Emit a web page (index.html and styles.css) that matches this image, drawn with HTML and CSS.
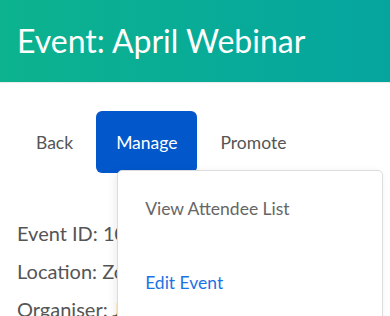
FILE: index.html
```html
<!DOCTYPE html>
<html>
<head>
<meta charset="utf-8">
<link rel="stylesheet" href="styles.css">
</head>
<body>
<header class="header"><h1 class="title">Event: April Webinar</h1></header>
<nav class="tabs">
  <a class="tab">Back</a>
  <div class="tab-wrap">
    <a class="tab active">Manage</a>
    <div class="menu">
      <a class="menu-item">View Attendee List</a>
      <a class="menu-item link">Edit Event</a>
    </div>
  </div>
  <a class="tab">Promote</a>
</nav>
<main class="details">
  <p class="line">Event ID: 1024</p>
  <p class="line">Location: Zoom</p>
  <p class="line">Organiser: Jane Smith</p>
</main>
</body>
</html>
```
FILE: styles.css
```css
* { box-sizing: border-box; }
html, body { margin: 0; padding: 0; }
body {
  font-family: Lato, "Noto Sans", sans-serif;
  background: #fff;
  width: 390px;
  height: 316px;
  overflow: hidden;
}
.header {
  height: 82px;
  background: linear-gradient(90deg, #0cb38e 0%, #05a59f 100%);
  box-shadow: 0 1px 1px rgba(0,0,0,0.08);
  display: flex;
  align-items: center;
  padding: 0 17px;
}
.title {
  margin: 0 0 2px;
  color: #fff;
  font-weight: 400;
  font-size: 32px;
}
.tabs {
  display: flex;
  gap: 3px;
  margin-top: 29px;
  padding-left: 16px;
}
.tab-wrap { position: relative; }
.tab {
  display: flex;
  align-items: center;
  height: 62px;
  padding: 0 20px;
  font-size: 17.5px;
  color: #555;
  border-radius: 6px;
}
.tab.active {
  background: #0257cb;
  color: #fff;
}
.menu {
  position: absolute;
  left: 21px;
  top: 59px;
  width: 266px;
  height: 200px;
  background: #fff;
  border: 1px solid #dcdcdc;
  border-radius: 5px;
  box-shadow: -2px 2px 8px rgba(0,0,0,0.08);
  padding: 27px 27px;
  display: flex;
  flex-direction: column;
  gap: 52px;
  z-index: 2;
}
.menu-item {
  font-size: 17.5px;
  color: #666;
  line-height: 22px;
}
.menu-item.link { color: #1b74e4; }
.details {
  padding: 48px 17px 0;
}
.line {
  margin: 0 0 14px;
  font-size: 20px;
  line-height: 24px;
  color: #555;
}
```
